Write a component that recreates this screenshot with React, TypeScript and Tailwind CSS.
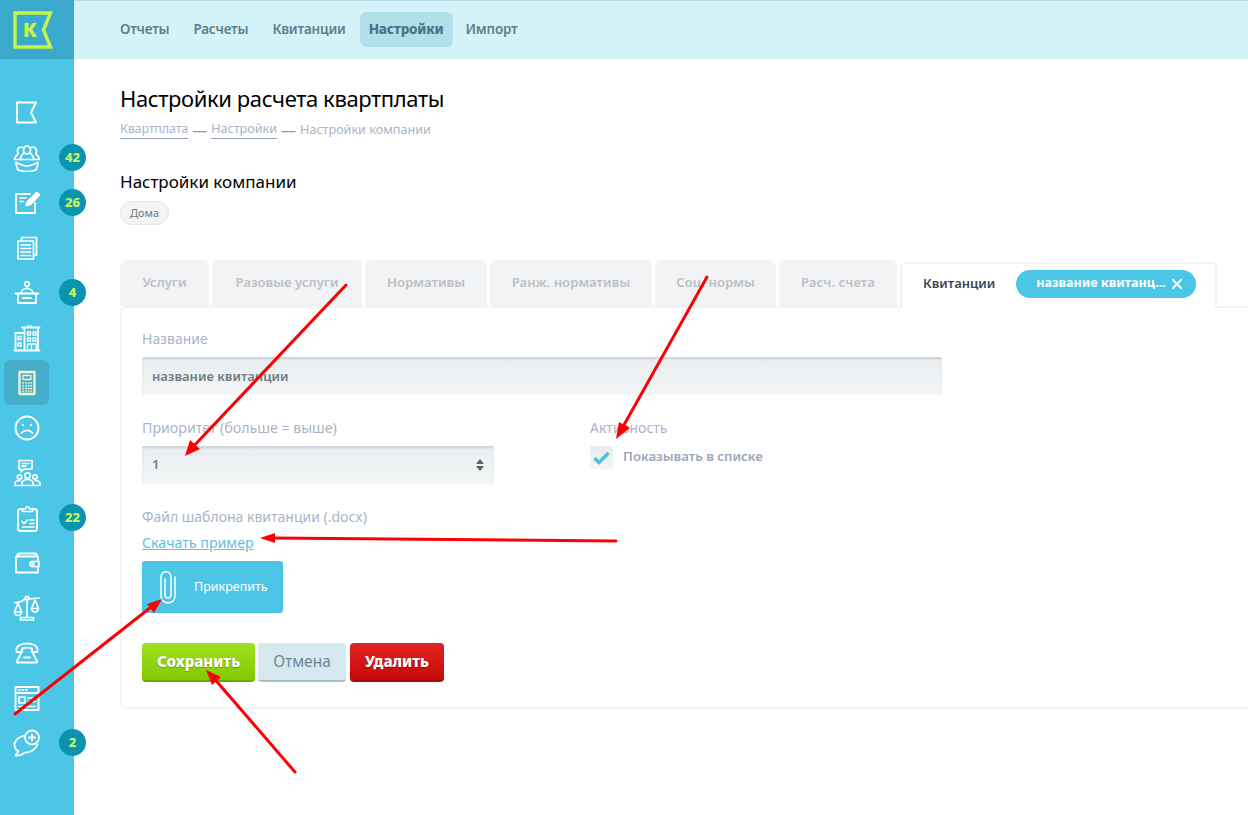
import React from 'react';

const font = { fontFamily: '"Noto Sans", "Open Sans", sans-serif' };

const IconShell: React.FC<{ children: React.ReactNode; color?: string }> = ({ children, color = '#ffffff' }) => (
  <svg width="28" height="28" viewBox="0 0 28 28" fill="none" stroke={color} strokeWidth="1.7" strokeLinecap="round" strokeLinejoin="round">
    {children}
  </svg>
);

const icons: React.ReactNode[] = [
  <IconShell><path d="M4 3.500h19l-5 10 5 10H4z" strokeLinecap="butt" strokeWidth="1.900" /></IconShell>,
  <IconShell>
    <path d="M5 9.500c-1.500-3 0-6.500 3-6.500 1.500 0 2.500.7 3 1.500M23 9.500c1.500-3 0-6.500-3-6.500-1.500 0-2.500.7-3 1.500" />
    <ellipse cx="14" cy="6" rx="3.500" ry="4" />
    <path d="M5 10C3 11.500 2 13 1.500 15.500H9M23 10c2 1.500 3 3 3.500 5.500H19" />
    <path d="M10.500 9C8.500 11 7.500 13 7 15.500h14C20.500 13 19.500 11 17.500 9" />
    <path d="M3 18.500c0 3.500 1 5.500 2 7.500 6 2 12 2 18 0 1-2 2-4 2-7.500l-6 2.500c-3 1.200-7 1.200-10 0z" />
  </IconShell>,
  <IconShell>
    <path d="M22 14v10H3V5h14" strokeWidth="1.900" />
    <path d="M7 9h6M7 12.500h3.500" />
    <path d="M13 16.500l1.500-4L23.500 3.500l3 2.500-9 9.500z" fill="#fff" />
  </IconShell>,
  <IconShell>
    <path d="M8.500 7V3.500h15V21H20.500" /><path d="M5 7h15.500v18H5z" />
    <path d="M8 11h9.500M8 14.500h9.500M8 18h9.500M8 21.500h9.500" />
  </IconShell>,
  <IconShell>
    <circle cx="14" cy="5" r="2.300" /><path d="M14 7.500v2" />
    <path d="M8 14.500c0-3 2.500-5 6-5s6 2 6 5" />
    <path d="M2.500 14.500h23M5 14.500V24h18v-9.500M10 19h8" strokeWidth="1.800" />
  </IconShell>,
  <IconShell>
    <path d="M2 9h9M2.500 9v17M1.500 26.500h25M9 3.500h17.500M11.500 3.500V26M25 3.500V26" strokeWidth="1.800" />
    <path d="M5 12.500h3v3H5zM5 19h3v3H5zM14.500 8h3v3h-3zM20 8h3v3h-3zM14.500 14h3v3h-3zM20 14h3v3h-3zM14.500 26v-6h8.500v6M18.500 20v6" strokeWidth="1.300" />
    <path d="M15 1.500v2M18 1.500v2" strokeWidth="1.300" />
  </IconShell>,
  <IconShell color="#f9f1c8">
    <path d="M6.500 3h15v22h-15z" strokeWidth="2.300" />
    <path d="M10 6.500h8v4h-8z" strokeWidth="1.300" />
    <path d="M10 14h.2M13 14h.2M15.500 14h.2M18 14h.2M10 16.700h.2M13 16.700h.2M15.500 16.700h.2M18 16.700h.2M10 19.400h.2M13 19.400h.2M15.500 19.400h.2M18 19.400h.2M10 22h.2M13 22h.2M15.500 22h.2M18 22h.2" strokeWidth="1.700" />
  </IconShell>,
  <IconShell>
    <circle cx="14" cy="14" r="11.500" strokeWidth="1.900" />
    <circle cx="10" cy="11" r="1.200" fill="#fff" stroke="none" /><circle cx="18" cy="11" r="1.200" fill="#fff" stroke="none" />
    <path d="M8.500 19c3-3.500 8-3.500 11 0" strokeWidth="1.900" />
  </IconShell>,
  <IconShell>
    <path d="M6 1.500h13v8.500h-8l-3 3v-3H6zM9 4.500h7M9 7.200h4" />
    <circle cx="14.500" cy="16.500" r="2.700" /><circle cx="6.500" cy="18" r="2.200" /><circle cx="22" cy="18" r="2.200" />
    <path d="M9 26.500v-2.500c0-2 2.500-3.500 5.500-3.500s5.500 1.500 5.500 3.500v2.500zM2 26.500v-2c0-2 2-3 5-3M27 26.500v-2c0-2-2-3-5-3M2 26.500h25" />
  </IconShell>,
  <IconShell>
    <path d="M9.500 5H7.500C6 5 5 6 5 7.500v17C5 26 6 27 7.500 27h14c1.500 0 2.500-1 2.500-2.500v-17C24 6 23 5 21.500 5h-2" strokeWidth="1.800" />
    <path d="M9.500 7.500V5h3c0-3 4-3 4 0h3v2.500z" />
    <path d="M9 17.500l2 2 3.500-3.500M17 16h4M17 19.500h4M9.500 23h11.500" />
  </IconShell>,
  <IconShell>
    <path d="M4 7.500c0-2 1-3 3-3h15c1.500 0 2 1 2 3M3 7.500h22V23.500H3z" strokeWidth="1.800" />
    <path d="M26 12.500h-6.500a2.500 2.500 0 0 0 0 5H26z" fill="#4cc6e6" />
    <circle cx="20" cy="15" r="1" />
  </IconShell>,
  <IconShell>
    <circle cx="14" cy="4" r="1.700" /><path d="M1.500 8.500c4 .5 7-.5 10.500-3.500M26.500 4c-4 0-6.500.500-10.500 1M14 6v17M9 23.500h10M7.500 26h13v-2.500h-13z" />
    <path d="M5 9L1.500 18h7zM1.500 18a3.500 3.500 0 0 0 7 0zM22 6l-3.500 8.500h7zM18.500 14.500a3.500 3.500 0 0 0 7 0z" />
  </IconShell>,
  <IconShell>
    <path d="M3.500 10.500c0-8 21-8 21 0V13h-5.500V9.500c-2.500-1-7.500-1-10 0V13H3.500z" strokeWidth="1.800" />
    <path d="M9.500 11l-3 6.500L4 22v1.500h20V22l-2.500-4.500-3-6.500M11 18.500h6" strokeWidth="1.800" />
  </IconShell>,
  <IconShell>
    <path d="M2.500 3h23v23h-23zM2.500 9h23" strokeWidth="1.900" />
    <path d="M6 6h.8M9.500 6h.8M13 6h.8" strokeWidth="1.800" />
    <path d="M6 13h6v6H6zM15 14h7M15 17.500h7M6 22.500h16" />
  </IconShell>,
  <IconShell>
    <circle cx="19" cy="8.500" r="7" strokeWidth="1.800" />
    <path d="M19 5.500v6M16 8.500h6" strokeWidth="2" />
    <path d="M12.500 6.500C6.500 7 1.500 11 1.500 16c0 3 1.500 5 4 6.500L2.500 26.500c4 .5 7-1 9-3 6 .5 11-3 13-8" strokeWidth="1.700" />
  </IconShell>,
];

const badges: Record<number, string> = { 1: '42', 2: '26', 4: '4', 9: '22', 14: '2' };

const Sidebar: React.FC = () => (
  <aside className="w-[74px] shrink-0 bg-[#4cc6e6] min-h-[815px]">
    <div className="h-[59px] bg-[#3ba9cc] flex items-center pl-[13px]">
      <svg width="41" height="38" viewBox="0 0 41 38" fill="none">
        <path d="M2 2h35.500l-7 17 7 17H2z" stroke="#c4f54a" strokeWidth="3.400" />
        <text x="10" y="25.500" fill="#c4f54a" fontSize="19" fontWeight="900" style={font}>К</text>
      </svg>
    </div>
    <nav className="pt-[31px] pl-1 flex flex-col">
      {icons.map((icon, i) => (
        <div key={i} className={`relative h-[45px] w-[45px] flex items-center justify-center rounded-md ${i === 6 ? 'bg-[#46aecb]' : ''}`}>
          {icon}
          {badges[i] && (
            <span className="absolute left-[55px] top-[9px] w-[27px] h-[27px] rounded-full bg-[#0c93b0] text-[#c9f75c] text-[13px] font-extrabold flex items-center justify-center">
              {badges[i]}
            </span>
          )}
        </div>
      ))}
    </nav>
  </aside>
);

const tabs = [
  ['Услуги', 'w-[89px]'],
  ['Разовые услуги', 'w-[150px]'],
  ['Нормативы', 'w-[122px]'],
  ['Ранж. нормативы', 'w-[162px]'],
  ['Соц. нормы', 'w-[121px]'],
  ['Расч. счета', 'w-[118px]'],
];

const fieldClass =
  'h-[38px] rounded-[2px] bg-gradient-to-b from-[#e9edef] to-[#f4f6f7] shadow-[inset_0_2px_2px_rgba(120,135,145,0.25)] flex items-center px-[10px] text-[13px] font-semibold text-[#6f7c84]';

const App: React.FC = () => (
  <div className="relative flex w-[1248px] h-[815px] overflow-hidden bg-white" style={font}>
    <Sidebar />
    <main className="flex-1 min-w-0">
      <header className="h-[59px] bg-[#d3f3f8] border-t border-[#b9dde6] pb-[1px] flex items-center pl-[36px] gap-[4px] text-[13.5px] tracking-[-0.2px] font-semibold text-[#5d7f8b]">
        <a className="px-[10px] h-[35px] flex items-center">Отчеты</a>
        <a className="px-[10px] h-[35px] flex items-center">Расчеты</a>
        <a className="px-[10px] h-[35px] flex items-center">Квитанции</a>
        <a className="px-[9px] h-[35px] flex items-center rounded-md bg-[#b3dfe9] font-extrabold text-[#4a7385]">Настройки</a>
        <a className="-ml-[1px] px-[10px] h-[35px] flex items-center">Импорт</a>
      </header>

      <div className="pl-[46px]">
        <h1 className="mt-[23px] text-[22px] tracking-[-0.4px] leading-[32px] text-black">Настройки расчета квартплаты</h1>
        <div className="mt-[6px] flex items-center gap-[4px] text-[12.6px] leading-[18px] text-[#a9b4c6]">
          <a className="border-b border-[#8fa3b5] tracking-[-0.2px]">Квартплата</a>
          <span className="text-[15px] text-[#8f9aa8]">—</span>
          <a className="border-b border-[#8fa3b5]">Настройки</a>
          <span className="text-[15px] text-[#8f9aa8]">—</span>
          <span>Настройки компании</span>
        </div>
        <h2 className="mt-[30px] text-[17px] leading-[26px] text-black">Настройки компании</h2>
        <span className="mt-[6px] inline-flex h-[24px] items-center rounded-full border border-[#e6e6e6] bg-[#f3f4f6] px-[9px] text-[11px] text-[#77797c]">Дома</span>

        <div className="mt-[35px] flex items-start h-[46px]">
          <div className="flex gap-[3px] items-end">
            {tabs.map(([label, width]) => (
              <div key={label} className={`${width} h-[46px] rounded-t-md bg-[#f2f3f5] flex items-center justify-center text-[13.2px] font-semibold text-[#bcc1c6]`}>
                {label}
              </div>
            ))}
          </div>
          <div className="relative z-10 ml-[3px] mt-[2px] w-[317px] h-[46px] rounded-t-md border-2 border-b-0 border-[#f2f3f5] bg-white flex items-center pl-[21px] pb-[5px] text-[13px] font-semibold text-[#3c4757]">
            Квитанции
            <span className="ml-[21px] h-[28px] w-[180px] rounded-full bg-[#4cc6e6] pl-[20px] text-white font-bold text-[12.6px] flex items-center gap-[5px]">
              название квитанц...
              <svg width="12" height="12" viewBox="0 0 12 12" stroke="#fff" strokeWidth="1.800" strokeLinecap="round"><path d="M2 2l8 8M10 2l-8 8" /></svg>
            </span>
          </div>
        </div>

        <section className="h-[403px] rounded-l-md border-2 border-r-0 border-[#f2f3f5] pl-[20px] pt-[21px]">
          <label className="block text-[14px] leading-[20px] text-[#a9b4c6]">Название</label>
          <div className={`${fieldClass} mt-[8px] w-[800px] pt-[2px]`}>название квитанции</div>

          <div className="mt-[23px] flex">
            <div className="w-[448px]">
              <label className="block text-[14.2px] leading-[20px] text-[#a9b4c6]">Приоритет (больше = выше)</label>
              <div className={`${fieldClass} mt-[8px] w-[352px] justify-between`}>
                <span>1</span>
                <svg width="10" height="14" viewBox="0 0 10 14" fill="#5f6468" className="-mr-[1px]"><path d="M5 1l4 5H1zM5 13L1 8h8z" /></svg>
              </div>
            </div>
            <div>
              <label className="block text-[14px] leading-[20px] text-[#a9b4c6]">Активность</label>
              <div className="mt-[8px] flex items-start">
                <span className="w-[23px] h-[23px] rounded-[2px] bg-gradient-to-b from-[#e9edef] to-[#f4f6f7] flex items-center justify-center">
                  <svg width="17" height="14" viewBox="0 0 17 14" fill="none" stroke="#4cc0dd" strokeWidth="3.400"><path d="M1.500 7l4.500 4.500L15.500 2" /></svg>
                </span>
                <span className="ml-[10px] text-[13.2px] leading-[21px] font-semibold text-[#9aa8bb]">Показывать в списке</span>
              </div>
            </div>
          </div>

          <label className="mt-[23px] block text-[14px] leading-[20px] text-[#a9b4c6]">Файл шаблона квитанции (.docx)</label>
          <a className="mt-[6px] block w-fit text-[14.2px] leading-[20px] text-[#5fc0dc] underline">Скачать пример</a>
          <button className="mt-[8px] flex h-[52px] w-[141px] items-center rounded-[3px] bg-[#4cc6e6] pl-[16px] text-[12.5px] text-white">
            <svg width="20" height="34" viewBox="0 0 20 34" fill="none" stroke="#fff" strokeWidth="1.500" strokeLinecap="round">
              <path d="M17 7v19c0 9-14 9-14 0V7c0-7 10-7 10 0v18c0 4-6 4-6 0V9" />
            </svg>
            <span className="ml-[16px]">Прикрепить</span>
          </button>

          <div className="mt-[30px] flex gap-[3px] text-[15px]">
            <button className="h-[39px] w-[113px] rounded-[4px] border-b-2 border-[#6fa800] bg-gradient-to-b from-[#a0e01f] to-[#84c800] font-extrabold text-white [text-shadow:0_1px_1px_rgba(0,0,0,0.25)]">Сохранить</button>
            <button className="h-[39px] w-[88px] rounded-[4px] border-b-2 border-[#a3bdc6] bg-[#d6e9ef] text-[15.500px] text-[#6a8796]">Отмена</button>
            <button className="ml-[1px] h-[39px] w-[94px] rounded-[4px] border-b-2 border-[#a60c0c] bg-gradient-to-b from-[#e32222] to-[#c40808] font-extrabold text-white [text-shadow:0_1px_1px_rgba(0,0,0,0.3)]">Удалить</button>
          </div>
        </section>
      </div>
    </main>

    {/* red annotation arrows drawn over the screenshot */}
    <svg className="absolute inset-0 pointer-events-none" width="1248" height="815" viewBox="0 0 1248 815" fill="none" stroke="#fb0007" strokeWidth="3" strokeLinecap="round">
      <path d="M346 285L190 450" />
      <path d="M185 456l5-16 10 9z" fill="#fb0007" stroke="none" />
      <path d="M707 277L620 432" />
      <path d="M616 439l3-17 11 6z" fill="#fb0007" stroke="none" />
      <path d="M616 541L272 538" />
      <path d="M260 538l15-5v10z" fill="#fb0007" stroke="none" />
      <path d="M15 714L155 604" />
      <path d="M162 599l-8 14-7-9z" fill="#fb0007" stroke="none" />
      <path d="M295 772L212 676" />
      <path d="M206 670l15 7-9 8z" fill="#fb0007" stroke="none" />
    </svg>
  </div>
);

export default App;
